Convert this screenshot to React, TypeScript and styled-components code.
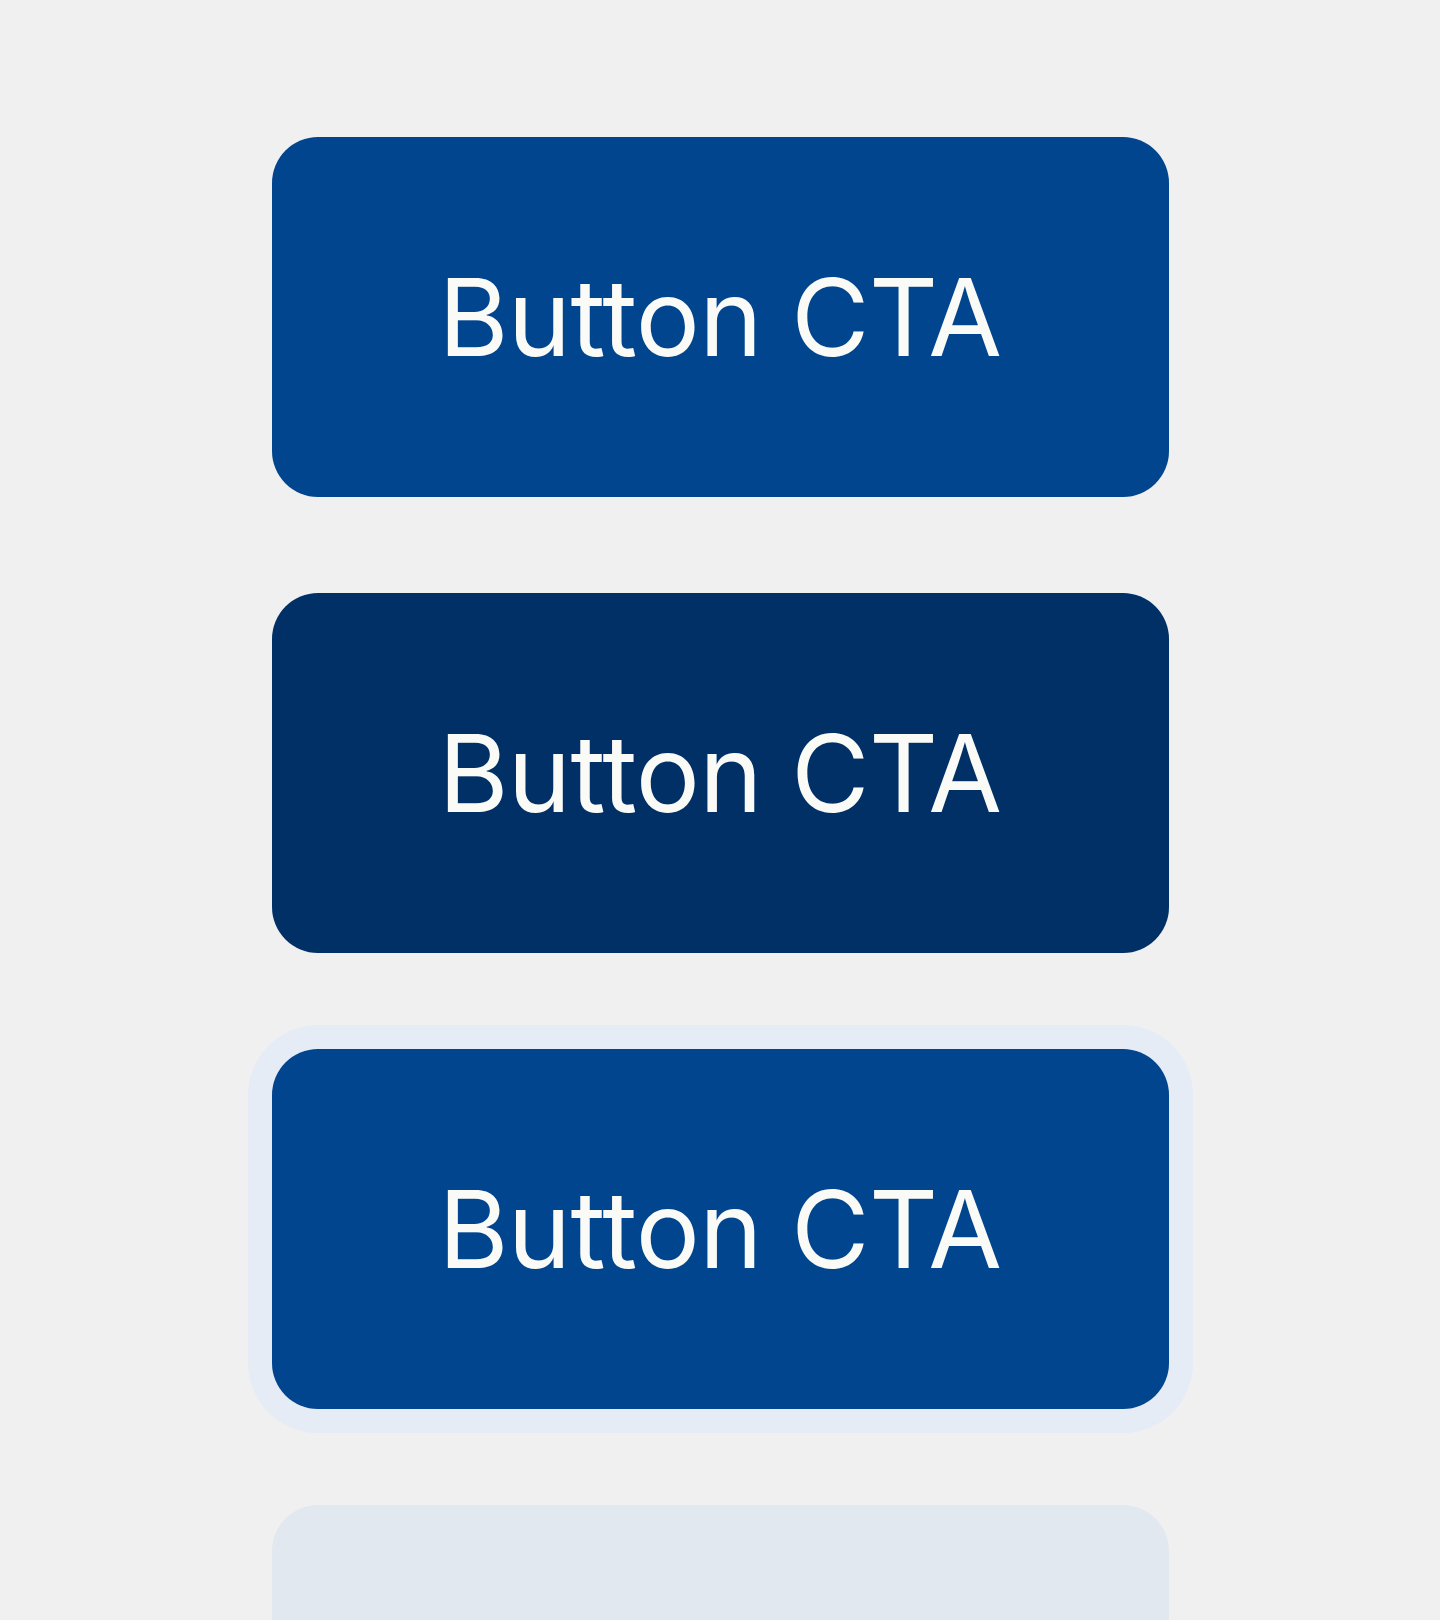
import styled, { createGlobalStyle, css } from "styled-components";

const GlobalStyle = createGlobalStyle`
  html, body {
    margin: 0;
    padding: 0;
    background: #f0f0f0;
  }
  body {
    font-family: Inter, "Liberation Sans", sans-serif;
  }
`;

const Stack = styled.main`
  display: flex;
  flex-direction: column;
  align-items: center;
  gap: 96px;
  padding-top: 137px;
  height: 1620px;
  box-sizing: border-box;
  overflow: hidden;
`;

type Variant = "default" | "pressed" | "focused" | "disabled";

const Button = styled.button<{ $variant: Variant }>`
  flex: none;
  width: 897px;
  height: 360px;
  border: none;
  border-radius: 46px;
  background: #01458f;
  color: #fafaf7;
  font-family: Inter, "Liberation Sans", sans-serif;
  font-size: 107px;
  font-weight: 400;
  letter-spacing: -0.6px;
  display: flex;
  align-items: center;
  justify-content: center;
  cursor: pointer;
  ${(p) =>
    p.$variant === "pressed" &&
    css`
      background: #013067;
    `}
  ${(p) =>
    p.$variant === "focused" &&
    css`
      box-shadow: 0 0 0 24px #e5ecf5;
    `}
  ${(p) =>
    p.$variant === "disabled" &&
    css`
      background: #e1e8f0;
      color: #c3cfdd;
      cursor: default;
    `}
`;

const variants: Variant[] = ["default", "pressed", "focused", "disabled"];

const App = () => {
  return (
    <>
      <GlobalStyle />
      <Stack>
        {variants.map((v) => (
          <Button key={v} $variant={v} disabled={v === "disabled"}>
            Button CTA
          </Button>
        ))}
      </Stack>
    </>
  );
};

export default App;
